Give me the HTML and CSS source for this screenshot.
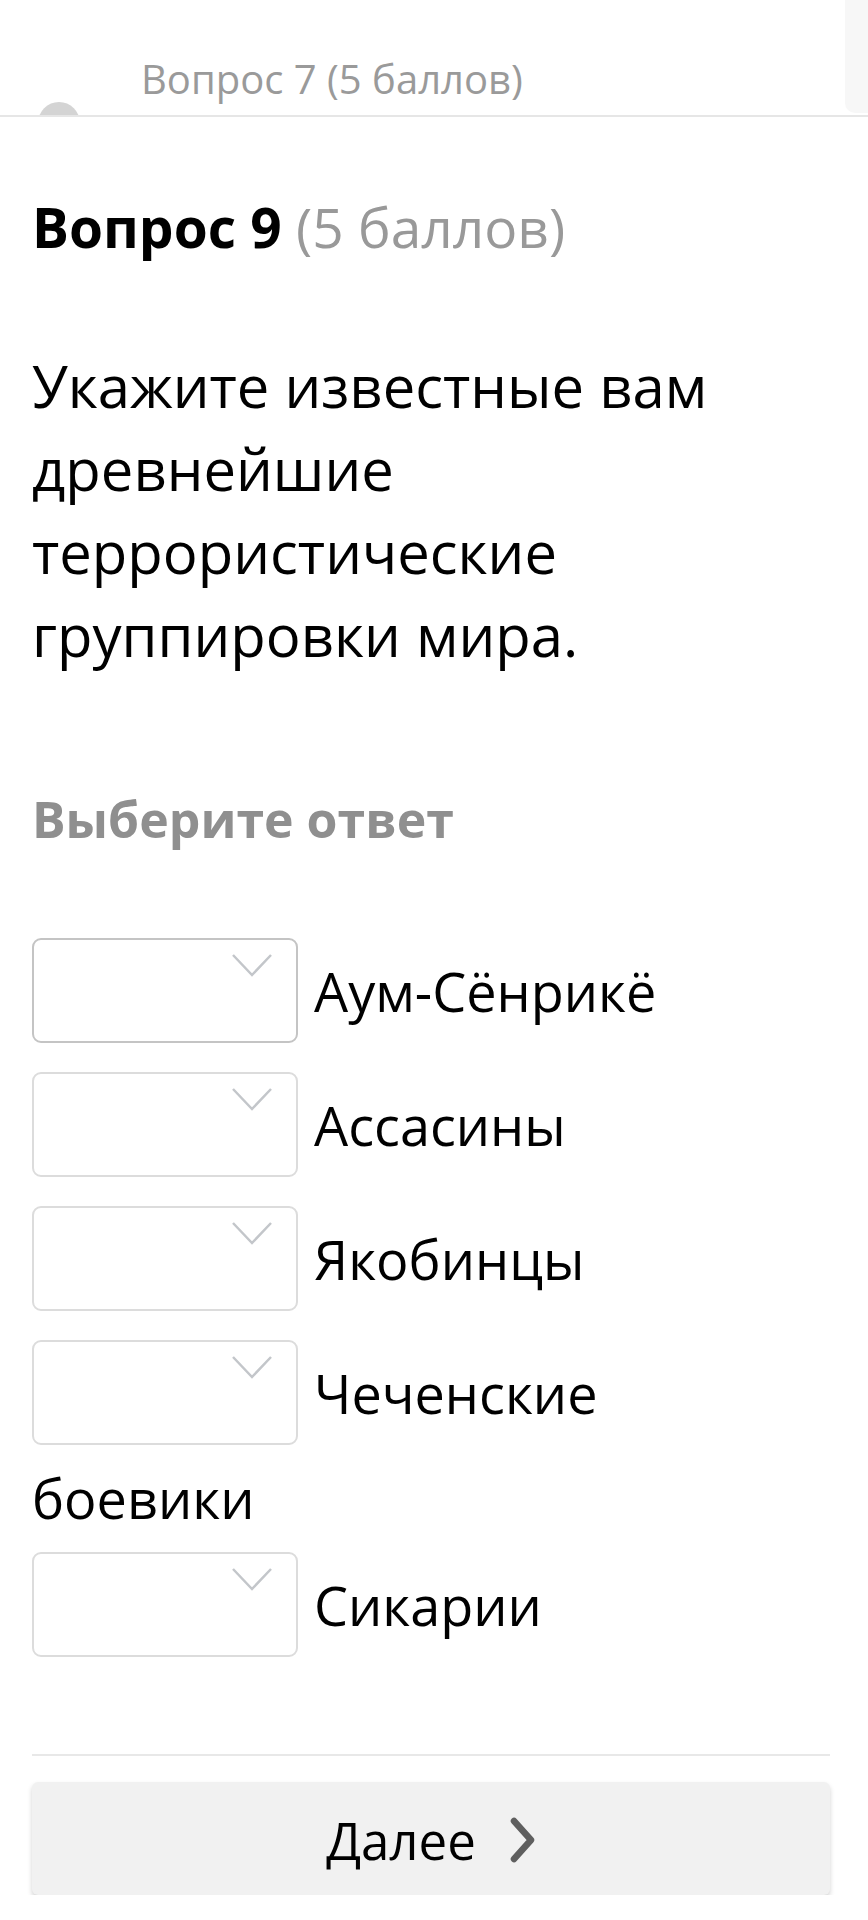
FILE: index.html
```html
<!DOCTYPE html>
<html>
<head>
<meta name="viewport" content="width=device-width, initial-scale=1">
<title>Вопрос 9</title>
<link rel="stylesheet" href="styles.css">
</head>
<body>

<div class="topbar">
  <div class="topbar-list">
    <div class="topbar-item">Вопрос 7 (5 баллов)</div>
    <div class="topbar-dot"></div>
  </div>
  <div class="topbar-side"></div>
</div>

<div class="question">
  <h2 class="question-title"><b>Вопрос 9</b> <span class="points">(5 баллов)</span></h2>
  <p class="question-text">Укажите известные вам древнейшие террористические группировки мира.</p>
  <div class="answer-label">Выберите ответ</div>

  <div class="match-list">
    <div class="match-row"><span class="match-select focused"><svg width="40" height="23" viewBox="0 0 40 23"><path d="M1 1 L20 21 L39 1" fill="none" stroke="#c3c6ca" stroke-width="2.5"/></svg></span>Аум-Сёнрикё</div>
    <div class="match-row"><span class="match-select"><svg width="40" height="23" viewBox="0 0 40 23"><path d="M1 1 L20 21 L39 1" fill="none" stroke="#c3c6ca" stroke-width="2.5"/></svg></span>Ассасины</div>
    <div class="match-row"><span class="match-select"><svg width="40" height="23" viewBox="0 0 40 23"><path d="M1 1 L20 21 L39 1" fill="none" stroke="#c3c6ca" stroke-width="2.5"/></svg></span>Якобинцы</div>
    <div class="match-row"><span class="match-select"><svg width="40" height="23" viewBox="0 0 40 23"><path d="M1 1 L20 21 L39 1" fill="none" stroke="#c3c6ca" stroke-width="2.5"/></svg></span>Чеченские боевики</div>
    <div class="match-row"><span class="match-select"><svg width="40" height="23" viewBox="0 0 40 23"><path d="M1 1 L20 21 L39 1" fill="none" stroke="#c3c6ca" stroke-width="2.5"/></svg></span>Сикарии</div>
  </div>

  <div class="divider"></div>
  <button class="next-btn">Далее <svg width="26" height="46" viewBox="0 0 26 46"><path d="M4 4 L21 23 L4 42" fill="none" stroke="#5f5f5f" stroke-width="6.5" stroke-linecap="round" stroke-linejoin="round"/></svg></button>
</div>

</body>
</html>
```

FILE: styles.css
```css
* {box-sizing: border-box}
body {
  margin: 0;
  font-family: "Open Sans", sans-serif;
  color: #000;
  background-color: #fff;
}

/* top bar with previous questions */
.topbar {
  display: flex;
  height: 117px;
  border-bottom: 2px solid #e6e6e6;
  overflow: hidden;
}
.topbar-list {
  flex: 1;
  padding: 50px 0 0 38px;
}
.topbar-item {
  padding-left: 103px;
  font-size: 40px;
  line-height: 57px;
  color: #9a9a9a;
}
.topbar-dot {
  width: 42px;
  height: 42px;
  margin-top: -5px;
  border-radius: 50%;
  background-color: #d4d4d4;
}
.topbar-side {
  width: 23px;
  height: 113px;
  background-color: #f7f7f7;
  border-bottom-left-radius: 10px;
}

.question {
  padding: 0 38px 0 32px;
}
.question-title {
  margin: 74px 0 0;
  font-size: 55px;
  line-height: 72px;
  font-weight: normal;
}
.question-title b {
  font-weight: bold;
}
.points {
  color: #999;
}
.question-text {
  margin: 81px 0 0;
  font-size: 58px;
  line-height: 83px;
}
.answer-label {
  margin-top: 109px;
  font-size: 50px;
  line-height: 68px;
  font-weight: bold;
  color: #8f8f8f;
}

.match-list {
  margin-top: 70px;
  padding-right: 60px;
}
.match-row {
  font-size: 54px;
  line-height: 78px;
}
.match-select {
  display: inline-block;
  width: 266px;
  height: 105px;
  margin: 15px 16px 14px 0;
  padding: 14px 24px 0 0;
  vertical-align: -45px;
  border: 2px solid #dcdcdc;
  border-radius: 9px;
  background-color: #fff;
}
.match-select svg {
  display: block;
  margin-left: auto;
}
.match-select.focused {
  border-color: #c4c4c4;
}

.divider {
  margin-top: 83px;
  height: 2px;
  background-color: #e8e8e8;
}
.next-btn {
  display: flex;
  justify-content: center;
  align-items: center;
  gap: 34px;
  width: 100%;
  height: 113px;
  margin-top: 26px;
  padding-top: 4px;
  border: none;
  border-radius: 6px;
  background-color: #f1f1f1;
  box-shadow: 0 3px 5px rgba(0, 0, 0, 0.18);
  font-family: "Open Sans", sans-serif;
  font-size: 51px;
  color: #000;
  cursor: pointer;
}
```
